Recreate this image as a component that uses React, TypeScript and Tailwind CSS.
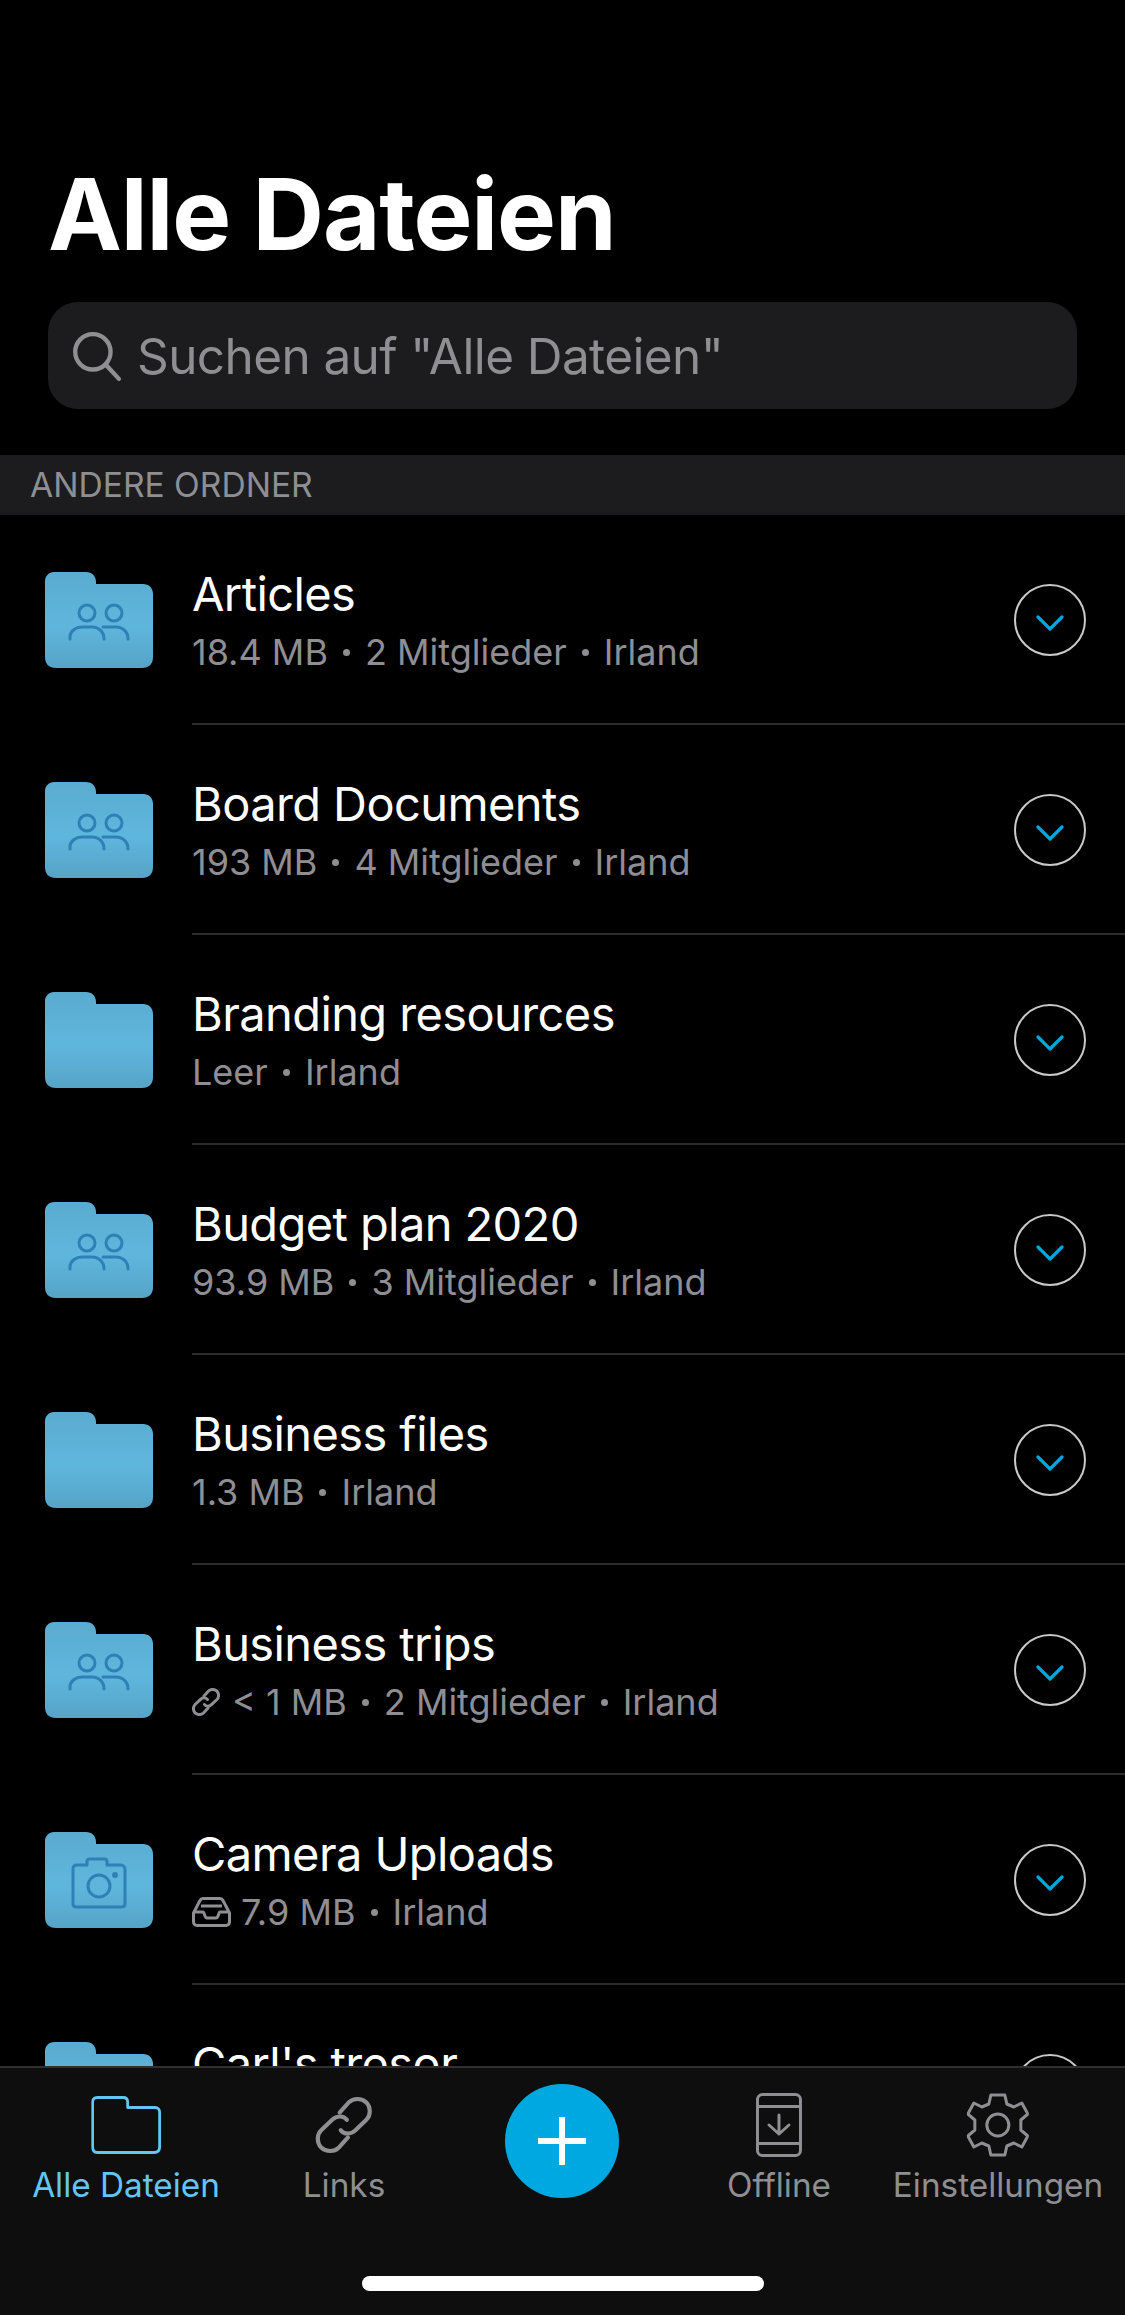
import type { ReactNode } from 'react';

type FolderKind = 'plain' | 'shared' | 'camera';
type MetaIcon = 'link' | 'inbox';

interface FolderRow {
  name: string;
  meta: string[];
  kind: FolderKind;
  metaIcon?: MetaIcon;
}

const ROWS: FolderRow[] = [
  { name: 'Articles', meta: ['18.4 MB', '2 Mitglieder', 'Irland'], kind: 'shared' },
  { name: 'Board Documents', meta: ['193 MB', '4 Mitglieder', 'Irland'], kind: 'shared' },
  { name: 'Branding resources', meta: ['Leer', 'Irland'], kind: 'plain' },
  { name: 'Budget plan 2020', meta: ['93.9 MB', '3 Mitglieder', 'Irland'], kind: 'shared' },
  { name: 'Business files', meta: ['1.3 MB', 'Irland'], kind: 'plain' },
  { name: 'Business trips', meta: ['< 1 MB', '2 Mitglieder', 'Irland'], kind: 'shared', metaIcon: 'link' },
  { name: 'Camera Uploads', meta: ['7.9 MB', 'Irland'], kind: 'camera', metaIcon: 'inbox' },
  { name: "Carl's tresor", meta: ['2 MB', 'Irland'], kind: 'plain' },
];

function FolderIcon({ kind, id }: { kind: FolderKind; id: string }) {
  return (
    <svg width="108" height="96" viewBox="0 0 108 96" className="shrink-0">
      <defs>
        <linearGradient id={id} x1="0" y1="0" x2="0" y2="1">
          <stop offset="0" stopColor="#5aabcf" />
          <stop offset="0.55" stopColor="#5fb6dd" />
          <stop offset="1" stopColor="#56a4c8" />
        </linearGradient>
      </defs>
      <path
        d="M9 0H41C47 0 51 4 51 10V12H98C104 12 108 16 108 22V85C108 92 104 96 97 96H11C4 96 0 92 0 85V9C0 4 4 0 9 0Z"
        fill={`url(#${id})`}
      />
      {kind === 'shared' && (
        <g fill="none" stroke="#2f80b6" strokeWidth="3" strokeLinecap="round">
          <circle cx="42" cy="41" r="8" />
          <circle cx="69" cy="41" r="8" />
          <path d="M25 67V65C25 59 31 55 37 55H47C54 55 59 60 59 67" />
          <path d="M58 55H71C78 55 83 60 83 67" />
        </g>
      )}
      {kind === 'camera' && (
        <g fill="none" stroke="#2f80b6" strokeWidth="3" strokeLinejoin="round">
          <path d="M32 33H42V29C42 28 43 27 44 27H60C61 27 62 28 62 29V33H76C78 33 80 35 80 37V72C80 74 78 75 76 75H32C29 75 28 74 28 72V37C28 35 29 33 32 33Z" />
          <circle cx="54" cy="54" r="11" />
          <circle cx="70" cy="43" r="1.5" fill="#2f80b6" />
        </g>
      )}
    </svg>
  );
}

function LinkGlyph({ size, stroke, sw }: { size: number; stroke: string; sw: number }) {
  return (
    <svg width={size} height={size} viewBox="0 0 28 28" fill="none" stroke={stroke} strokeWidth={sw} strokeLinecap="round">
      <path d="M12 8L16.5 3C18.6 0.9 22.6 0.9 24.9 3.1C27.1 5.4 27.1 9.4 24.9 11.5L19.5 16.6C17.4 18.7 14 18.6 12.5 16.5" />
      <path d="M16 20L11.5 25C9.4 27.1 5.4 27.1 3.1 24.9C0.9 22.6 0.9 18.6 3.1 16.5L8.5 11.4C10.6 9.3 14 9.4 15.5 11.5" />
    </svg>
  );
}

function MetaGlyph({ icon }: { icon: MetaIcon }) {
  if (icon === 'link') {
    return (
      <span className="mr-[12px]">
        <LinkGlyph size={28} stroke="#8e8e93" sw={3} />
      </span>
    );
  }
  return (
    <svg width="39" height="30" viewBox="0 0 39 30" fill="none" stroke="#8e8e93" strokeWidth="3" strokeLinejoin="round" className="mr-[10px]">
      <path d="M1.5 16L8 3.5C8.6 2.2 9.6 1.5 11 1.5H28C29.4 1.5 30.4 2.2 31 3.5L37.5 16V25C37.5 27 36 28.5 34 28.5H5C3 28.5 1.5 27 1.5 25Z" />
      <path d="M1.5 15H11C12.5 15 12.5 21 15 21H24C26.5 21 26.5 15 28 15H37.5" />
      <path d="M9 9H30" />
    </svg>
  );
}

function Row({ row, index, isLast }: { row: FolderRow; index: number; isLast: boolean }) {
  return (
    <div className="h-[210px] shrink-0 flex pl-[45px]">
      <div className="pt-[57px]">
        <FolderIcon kind={row.kind} id={`folder-${index}`} />
      </div>
      <div className={`flex-1 ml-[39px] relative ${isLast ? '' : 'border-b-2 border-[#2c2c2e]'}`}>
        <div className="absolute left-0 top-[50px] text-[47px] leading-[58px] text-white tracking-[-0.6px]">{row.name}</div>
        <div className="absolute left-0 top-[115px] h-[44px] flex items-center text-[36px] text-[#8e8e93]">
          {row.metaIcon && <MetaGlyph icon={row.metaIcon} />}
          {row.meta.map((part, i) => (
            <span key={part} className="flex items-center">
              {i > 0 && <span className="mx-[15px] w-[7px] h-[7px] rounded-full bg-[#8e8e93]" />}
              {part}
            </span>
          ))}
        </div>
        <div className="absolute left-[822px] top-[69px] w-[72px] h-[72px] rounded-full border-2 border-[#c9c9c9] flex items-center justify-center">
          <svg width="28" height="16" viewBox="0 0 28 16" fill="none" stroke="#00a7df" strokeWidth="3.2" strokeLinecap="round" strokeLinejoin="round" className="mt-[6px]">
            <path d="M2 2L14 14L26 2" />
          </svg>
        </div>
      </div>
    </div>
  );
}

function Tab({ label, active, center, icon }: { label: string; active?: boolean; center: string; icon: ReactNode }) {
  return (
    <div className={`absolute top-[27px] flex flex-col items-center -translate-x-1/2 ${center}`}>
      <div className="h-[60px] flex items-center justify-center">{icon}</div>
      <div className={`mt-[10px] whitespace-nowrap text-[33.3px] leading-[40px] ${active ? 'text-[#62c6f2]' : 'text-[#8e8e93]'}`}>{label}</div>
    </div>
  );
}

export default function App() {
  return (
    <div className="w-[1125px] h-[2315px] bg-black flex flex-col overflow-hidden font-['Inter','Liberation_Sans',sans-serif]">
      <div className="shrink-0 px-[48px] pt-[154px]">
        <h1 className="text-[99px] leading-[120px] font-bold text-white tracking-[-1.1px]">Alle Dateien</h1>
        <div className="mt-[28px] h-[107px] rounded-[30px] bg-[#1c1c1e] flex items-center pl-[22px]">
          <svg width="52" height="52" viewBox="0 0 50 50" fill="none" stroke="#8e8e93" strokeWidth="4.2" strokeLinecap="round">
            <circle cx="22" cy="21" r="17" />
            <path d="M34.5 33.5L47 47" />
          </svg>
          <span className="ml-[15px] mt-[2px] text-[49.5px] text-[#8e8e93] tracking-[-0.6px]">Suchen auf "Alle Dateien"</span>
        </div>
      </div>

      <div className="shrink-0 mt-[46px] h-[60px] bg-[#1c1c1e] flex items-center pl-[30px] text-[33.6px] text-[#8e8e93]">ANDERE ORDNER</div>

      <div className="flex-1 min-h-0 overflow-hidden flex flex-col">
        {ROWS.map((row, i) => (
          <Row key={row.name} row={row} index={i} isLast={i === ROWS.length - 1} />
        ))}
      </div>

      <div className="shrink-0 h-[249px] bg-[#0e0e0e] border-t-2 border-[#303032] relative">
        <Tab
          label="Alle Dateien"
          active
          center="left-[126px]"
          icon={
            <svg width="70" height="58" viewBox="0 0 70 58" fill="none" stroke="#62c6f2" strokeWidth="2.8" strokeLinejoin="round">
              <path d="M6 1.5H32C35 1.5 36.5 3 36.5 6V11.5H64C66.5 11.5 68.5 13.5 68.5 16V51C68.5 54.5 66.5 56.5 63 56.5H6C3 56.5 1.5 54.5 1.5 51V6C1.5 3 3 1.5 6 1.5Z" />
            </svg>
          }
        />
        <Tab label="Links" center="left-[344px]" icon={<LinkGlyph size={58} stroke="#8e8e93" sw={2} />} />
        <div className="absolute left-[505px] top-[16px] w-[114px] h-[114px] rounded-full bg-[#00a8e1] flex items-center justify-center">
          <svg width="48" height="48" viewBox="0 0 48 48" fill="#ffffff">
            <rect x="21" y="0" width="6" height="48" />
            <rect x="0" y="21" width="48" height="6" />
          </svg>
        </div>
        <Tab
          label="Offline"
          center="left-[779px]"
          icon={
            <svg width="46" height="64" viewBox="0 0 46 64" fill="none" stroke="#8e8e93" strokeWidth="3" strokeLinecap="round" strokeLinejoin="round">
              <rect x="1.5" y="1.5" width="43" height="61" rx="5" />
              <path d="M1.5 13.5H44.5M1.5 50.5H44.5" />
              <path d="M23 22V41M13 32L23 41L33 32" />
            </svg>
          }
        />
        <Tab
          label="Einstellungen"
          center="left-[998px]"
          icon={
            <svg width="62" height="64" viewBox="0 0 62 64" fill="none" stroke="#8e8e93" strokeWidth="3" strokeLinejoin="round">
              <path d="M24 2H38L40 11L47 14L55 10L61 21L54 27V37L61 43L55 54L47 50L40 53L38 62H24L22 53L15 50L7 54L1 43L8 37V27L1 21L7 10L15 14L22 11Z" />
              <circle cx="31" cy="32" r="11" />
            </svg>
          }
        />
        <div className="absolute left-[362px] top-[208px] w-[402px] h-[15px] rounded-full bg-white" />
      </div>
    </div>
  );
}
